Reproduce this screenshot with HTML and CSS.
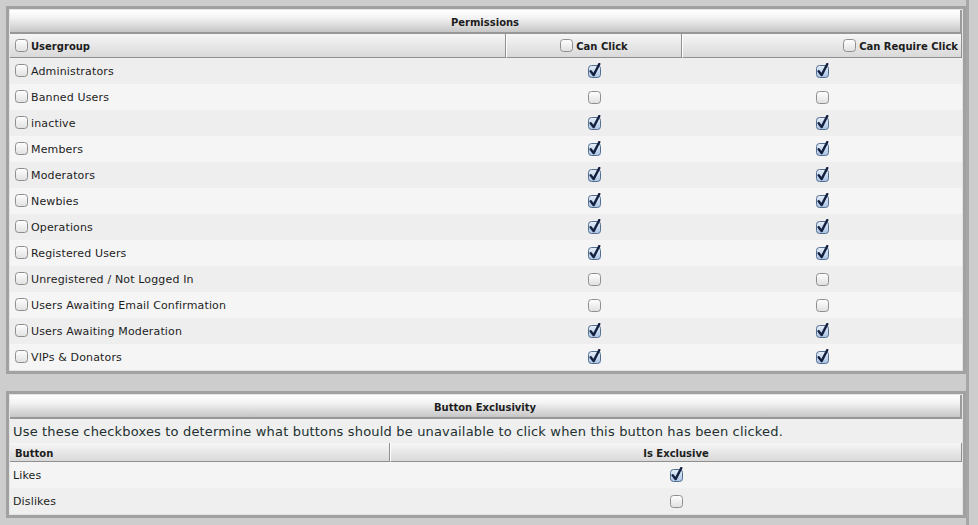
FILE: index.html
```html
<!DOCTYPE html>
<html>
    <head>
        <title>Button permissions</title>
        <link rel="stylesheet" href="styles.css">
    </head>
    <body>
    <div class="page">

        <div class="panel">
            <div class="panel-title">Permissions</div>
            <table class="grid">
                <colgroup>
                    <col style="width: 496px">
                    <col style="width: 176px">
                    <col>
                </colgroup>
                <thead>
                    <tr class="head tall">
                        <th class="left"><label><input type="checkbox"><span>Usergroup</span></label></th>
                        <th><label><input type="checkbox"><span>Can Click</span></label></th>
                        <th class="right"><label><input type="checkbox"><span>Can Require Click</span></label></th>
                    </tr>
                </thead>
                <tbody>
                    <tr><td class="left"><label><input type="checkbox"><span>Administrators</span></label></td><td><input type="checkbox" checked></td><td><input type="checkbox" checked></td></tr>
                    <tr><td class="left"><label><input type="checkbox"><span>Banned Users</span></label></td><td><input type="checkbox"></td><td><input type="checkbox"></td></tr>
                    <tr><td class="left"><label><input type="checkbox"><span>inactive</span></label></td><td><input type="checkbox" checked></td><td><input type="checkbox" checked></td></tr>
                    <tr><td class="left"><label><input type="checkbox"><span>Members</span></label></td><td><input type="checkbox" checked></td><td><input type="checkbox" checked></td></tr>
                    <tr><td class="left"><label><input type="checkbox"><span>Moderators</span></label></td><td><input type="checkbox" checked></td><td><input type="checkbox" checked></td></tr>
                    <tr><td class="left"><label><input type="checkbox"><span>Newbies</span></label></td><td><input type="checkbox" checked></td><td><input type="checkbox" checked></td></tr>
                    <tr><td class="left"><label><input type="checkbox"><span>Operations</span></label></td><td><input type="checkbox" checked></td><td><input type="checkbox" checked></td></tr>
                    <tr><td class="left"><label><input type="checkbox"><span>Registered Users</span></label></td><td><input type="checkbox" checked></td><td><input type="checkbox" checked></td></tr>
                    <tr><td class="left"><label><input type="checkbox"><span>Unregistered / Not Logged In</span></label></td><td><input type="checkbox"></td><td><input type="checkbox"></td></tr>
                    <tr><td class="left"><label><input type="checkbox"><span>Users Awaiting Email Confirmation</span></label></td><td><input type="checkbox"></td><td><input type="checkbox"></td></tr>
                    <tr><td class="left"><label><input type="checkbox"><span>Users Awaiting Moderation</span></label></td><td><input type="checkbox" checked></td><td><input type="checkbox" checked></td></tr>
                    <tr><td class="left"><label><input type="checkbox"><span>VIPs &amp; Donators</span></label></td><td><input type="checkbox" checked></td><td><input type="checkbox" checked></td></tr>
                </tbody>
            </table>
        </div>

        <div class="panel">
            <div class="panel-title">Button Exclusivity</div>
            <table class="grid">
                <colgroup>
                    <col style="width: 380px">
                    <col>
                </colgroup>
                <thead>
                    <tr class="explain">
                        <td colspan="2">Use these checkboxes to determine what buttons should be unavailable to click when this button has been clicked.</td>
                    </tr>
                    <tr class="head">
                        <th class="left"><span>Button</span></th>
                        <th><span>Is Exclusive</span></th>
                    </tr>
                </thead>
                <tbody class="flip">
                    <tr><td class="left plain"><span>Likes</span></td><td><input type="checkbox" checked></td></tr>
                    <tr><td class="left plain"><span>Dislikes</span></td><td><input type="checkbox"></td></tr>
                </tbody>
            </table>
        </div>

    </div>
    </body>
</html>
```

FILE: styles.css
```css
body {
    margin: 0;
    background: #cdcdcd;
    color: #1d1d1d;
    font-family: "DejaVu Sans", Verdana, sans-serif;
    font-size: 11px;
}
.page {
    box-sizing: border-box;
    width: 969px;
    min-height: 525px;
    padding-top: 6px;
    border-right: 3px solid #a6a6a6;
}
.panel {
    box-sizing: border-box;
    width: 960px;
    margin-left: 6px;
    padding: 1px;
    border: 3px solid #a1a1a1;
    background: #e4e4e4;
}
.panel + .panel {
    margin-top: 17px;
}
.panel-title {
    box-sizing: border-box;
    height: 24px;
    padding-top: 3px;
    border-right: 2px solid #9b9b9b;
    border-bottom: 2px solid #979797;
    background: linear-gradient(#ffffff 0%, #f3f3f3 35%, #c6c6c6 100%);
    font-size: 10px;
    font-weight: bold;
    line-height: 19px;
    text-align: center;
}

/* tables */
.grid {
    width: 100%;
    border-collapse: separate;
    border-spacing: 0;
    table-layout: fixed;
}
.grid th,
.grid td {
    padding: 0;
    text-align: center;
    vertical-align: middle;
    white-space: nowrap;
}
.grid .left {
    padding-left: 5px;
    text-align: left;
}
.grid .right {
    padding-right: 3px;
    text-align: right;
}
.grid .plain {
    padding-left: 3px;
}
.grid label {
    display: inline-flex;
    align-items: flex-start;
}
.grid td span {
    line-height: 13px;
    letter-spacing: .15px;
}
.grid label span {
    padding-top: 5px;
}
.grid .plain span,
.head th > span {
    display: inline-block;
}
.grid .plain span {
    padding-top: 1px;
}
.head th span {
    line-height: 13px;
}
.head th label span {
    padding-top: 5px;
}
.head th > span {
    padding-top: 2px;
}

.head th {
    height: 18px;
    border-bottom: 1px solid #8f8f8f;
    border-right: 1px solid #8f8f8f;
    background: linear-gradient(#f6f6f6, #d9d9d9);
    font-size: 10px;
    font-weight: bold;
}
.head th + th {
    border-left: 1px solid #ffffff;
}
.head.tall th {
    height: 23px;
}

.grid tbody tr {
    height: 26px;
}
.grid tbody tr:nth-child(odd) {
    background: #eeeeee;
}
.grid tbody tr:nth-child(even) {
    background: #f5f5f5;
}
.grid .flip tr:nth-child(odd) {
    background: #f4f4f4;
}
.grid .flip tr:nth-child(even) {
    background: #efefef;
}

.explain td {
    height: 24px;
    padding-left: 3px;
    background: #efefef;
    font-size: 13px;
    letter-spacing: .17px;
    text-align: left;
    color: #223030;
}

/* aqua style checkboxes */
input[type="checkbox"] {
    -webkit-appearance: none;
    appearance: none;
    width: 13px;
    height: 17px;
    margin: 0;
    border: 0;
    vertical-align: middle;
    background: no-repeat url("data:image/svg+xml,%3Csvg xmlns='http://www.w3.org/2000/svg' width='13' height='17'%3E%3Cdefs%3E%3ClinearGradient id='g' x1='0' y1='0' x2='0' y2='1'%3E%3Cstop offset='0' stop-color='%23ffffff'/%3E%3Cstop offset='1' stop-color='%23e0e0e0'/%3E%3C/linearGradient%3E%3C/defs%3E%3Crect x='.5' y='2.5' width='12' height='12' rx='3' fill='url(%23g)' stroke='%238e8e8e'/%3E%3C/svg%3E");
}
input[type="checkbox"]:checked {
    background-image: url("data:image/svg+xml,%3Csvg xmlns='http://www.w3.org/2000/svg' width='13' height='17'%3E%3Cdefs%3E%3ClinearGradient id='g' x1='0' y1='0' x2='0' y2='1'%3E%3Cstop offset='0' stop-color='%23e6effa'/%3E%3Cstop offset='1' stop-color='%23a9c3e3'/%3E%3C/linearGradient%3E%3C/defs%3E%3Crect x='.5' y='2.5' width='12' height='12' rx='3' fill='url(%23g)' stroke='%23556d8f'/%3E%3Cpath d='M2.7 8.2 L5.6 12.1 L11.3 1' fill='none' stroke='%23142040' stroke-width='2.4' stroke-linecap='round' stroke-linejoin='round'/%3E%3C/svg%3E");
}
label input[type="checkbox"] {
    margin-top: 2px;
    margin-right: 3px;
}
```
